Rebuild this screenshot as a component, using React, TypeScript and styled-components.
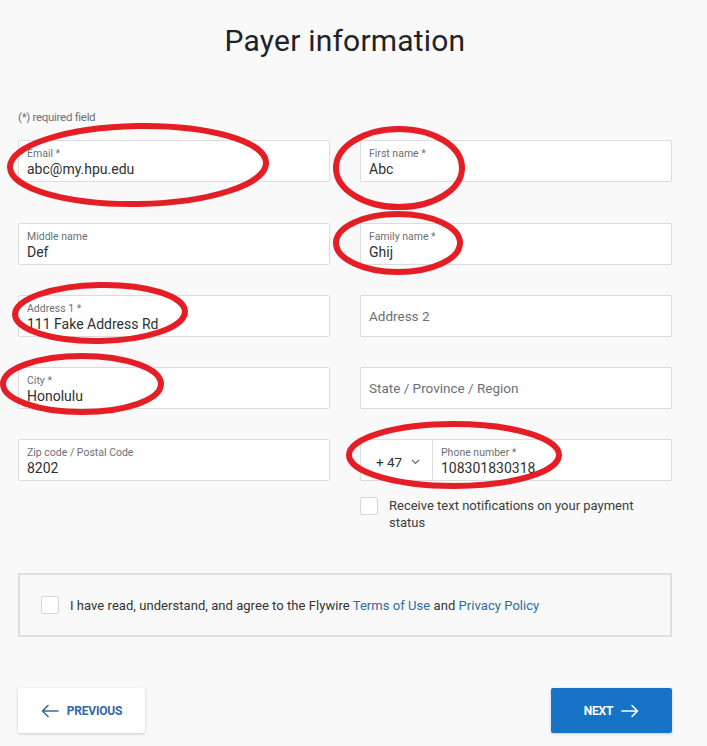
import React, { FC } from 'react'
import styled, { createGlobalStyle } from 'styled-components'

const GlobalStyle = createGlobalStyle`
    html, body {
        margin: 0;
        padding: 0;
        background: #f9f9f9;
    }
    body {
        font-family: Roboto, "Liberation Sans", sans-serif;
        color: #222;
    }
`

const Page = styled.div`
    position: relative;
    width: 707px;
    height: 746px;
    overflow: hidden;
`

const Container = styled.div`
    width: 654px;
    margin-left: 18px;
    padding-top: 22px;
`

const Title = styled.h1`
    margin: 0;
    text-align: center;
    font-size: 30px;
    font-weight: 400;
    letter-spacing: 0.2px;
    color: #1f2328;
    line-height: 38px;
`

const RequiredNote = styled.div`
    margin-top: 50px;
    font-size: 11.5px;
    letter-spacing: -0.3px;
    color: #6f6f6f;
    line-height: 14px;
`

const FieldGrid = styled.div`
    margin-top: 16px;
    display: grid;
    grid-template-columns: 1fr 1fr;
    column-gap: 30px;
    row-gap: 30px;
    align-items: start;
`

const Field = styled.div<{ $spaced?: boolean }>`
    box-sizing: border-box;
    height: 42px;
    background: #fff;
    border: 1px solid #dcdcdc;
    border-radius: 2px;
    padding: 6px 8px 0;
    margin-bottom: ${p => (p.$spaced ? '11px' : '0')};
    display: flex;
    flex-direction: column;
`

const Label = styled.span`
    font-size: 10.5px;
    line-height: 13px;
    color: #6b6f75;
`

const Value = styled.span`
    font-size: 14px;
    line-height: 19px;
    color: #303030;
`

const Placeholder = styled(Field)`
    padding: 0 8px;
    justify-content: center;
    font-size: 13.5px;
    color: #6b6f75;
`

const PhoneField = styled(Field)`
    flex-direction: row;
    padding: 0;
`

const CountryCode = styled.div`
    width: 72px;
    flex-shrink: 0;
    border-right: 1px solid #dcdcdc;
    display: flex;
    align-items: center;
    padding: 3px 0 0 15px;
    box-sizing: border-box;
    font-size: 13.5px;
    color: #303030;
    gap: 9px;
`

const PhoneInner = styled.div`
    padding: 6px 8px 0;
    display: flex;
    flex-direction: column;
`

const Notify = styled.label`
    display: flex;
    gap: 11px;
    margin-top: 16px;
    font-size: 13px;
    line-height: 17px;
    color: #3c3c3c;
    padding-right: 28px;
`

const Check = styled.span`
    box-sizing: border-box;
    width: 18px;
    height: 18px;
    flex-shrink: 0;
    background: #fff;
    border: 1px solid #d6d6d6;
    border-radius: 2px;
`

const TermsBox = styled.div`
    box-sizing: border-box;
    margin-top: 42px;
    height: 64px;
    border: 2px solid #dedede;
    display: flex;
    align-items: center;
    gap: 11px;
    padding: 0 21px;
    font-size: 13px;
    letter-spacing: 0.05px;
    color: #333;
`

const Link = styled.a`
    color: #2f6aa3;
    text-decoration: none;
`

const Actions = styled.div`
    margin-top: 51px;
    display: flex;
    justify-content: space-between;
`

const Button = styled.button<{ $primary?: boolean }>`
    height: 45px;
    width: ${p => (p.$primary ? '121px' : '127px')};
    border: none;
    border-radius: 2px;
    display: flex;
    align-items: center;
    justify-content: center;
    gap: 8px;
    font-family: Roboto, "Liberation Sans", sans-serif;
    font-size: 12px;
    font-weight: 700;
    letter-spacing: -0.2px;
    background: ${p => (p.$primary ? '#1773c6' : '#fff')};
    color: ${p => (p.$primary ? '#fff' : '#2f6aa3')};
    box-shadow: 0 1px 3px rgba(0, 0, 0, 0.2);
`

const Marks = styled.svg`
    position: absolute;
    left: 0;
    top: 0;
    pointer-events: none;
`

const Arrow: FC<{ left?: boolean }> = ({ left }) => (
    <svg width="18" height="14" viewBox="0 0 18 14" fill="none" stroke="currentColor" strokeWidth="1.6" strokeLinecap="round" strokeLinejoin="round">
        {left ? (
            <path d="M17 7H1.5M7 1.5L1.5 7 7 12.5" />
        ) : (
            <path d="M1 7h15.5M11 1.5L16.5 7 11 12.5" />
        )}
    </svg>
)

const rings = [
    { cx: 138, cy: 165, rx: 128, ry: 39, r: -1 },
    { cx: 399, cy: 168, rx: 63, ry: 39, r: 0 },
    { cx: 398, cy: 243, rx: 62, ry: 29, r: 0 },
    { cx: 100, cy: 313, rx: 85, ry: 28, r: -1 },
    { cx: 82, cy: 384, rx: 79, ry: 28, r: 0 },
    { cx: 454, cy: 455, rx: 105, ry: 31, r: 0 },
]

const App: FC = () => {
    return (
        <Page>
            <GlobalStyle />
            <Container>
                <Title>Payer information</Title>
                <RequiredNote>(*) required field</RequiredNote>
                <FieldGrid>
                    <Field $spaced>
                        <Label>Email *</Label>
                        <Value>abc@my.hpu.edu</Value>
                    </Field>
                    <Field $spaced>
                        <Label>First name *</Label>
                        <Value>Abc</Value>
                    </Field>
                    <Field>
                        <Label>Middle name</Label>
                        <Value>Def</Value>
                    </Field>
                    <Field>
                        <Label>Family name *</Label>
                        <Value>Ghij</Value>
                    </Field>
                    <Field>
                        <Label>Address 1 *</Label>
                        <Value>111 Fake Address Rd</Value>
                    </Field>
                    <Placeholder>Address 2</Placeholder>
                    <Field>
                        <Label>City *</Label>
                        <Value>Honolulu</Value>
                    </Field>
                    <Placeholder>State / Province / Region</Placeholder>
                    <Field>
                        <Label>Zip code / Postal Code</Label>
                        <Value>8202</Value>
                    </Field>
                    <div>
                        <PhoneField>
                            <CountryCode>
                                <span>+ 47</span>
                                <svg width="9" height="6" viewBox="0 0 9 6" fill="none" stroke="#666" strokeWidth="1.1">
                                    <path d="M1 1l3.5 3.5L8 1" />
                                </svg>
                            </CountryCode>
                            <PhoneInner>
                                <Label>Phone number *</Label>
                                <Value>108301830318</Value>
                            </PhoneInner>
                        </PhoneField>
                        <Notify>
                            <Check />
                            <span>Receive text notifications on your payment status</span>
                        </Notify>
                    </div>
                </FieldGrid>
                <TermsBox>
                    <Check />
                    <span>
                        I have read, understand, and agree to the Flywire <Link>Terms of Use</Link> and <Link>Privacy Policy</Link>
                    </span>
                </TermsBox>
                <Actions>
                    <Button>
                        <Arrow left />
                        PREVIOUS
                    </Button>
                    <Button $primary>
                        NEXT
                        <Arrow />
                    </Button>
                </Actions>
            </Container>
            <Marks width="707" height="746">
                {rings.map((e, i) => (
                    <ellipse
                        key={i}
                        cx={e.cx}
                        cy={e.cy}
                        rx={e.rx}
                        ry={e.ry}
                        transform={`rotate(${e.r} ${e.cx} ${e.cy})`}
                        fill="none"
                        stroke="#e51d25"
                        strokeWidth="6"
                    />
                ))}
            </Marks>
        </Page>
    )
}

export default App
